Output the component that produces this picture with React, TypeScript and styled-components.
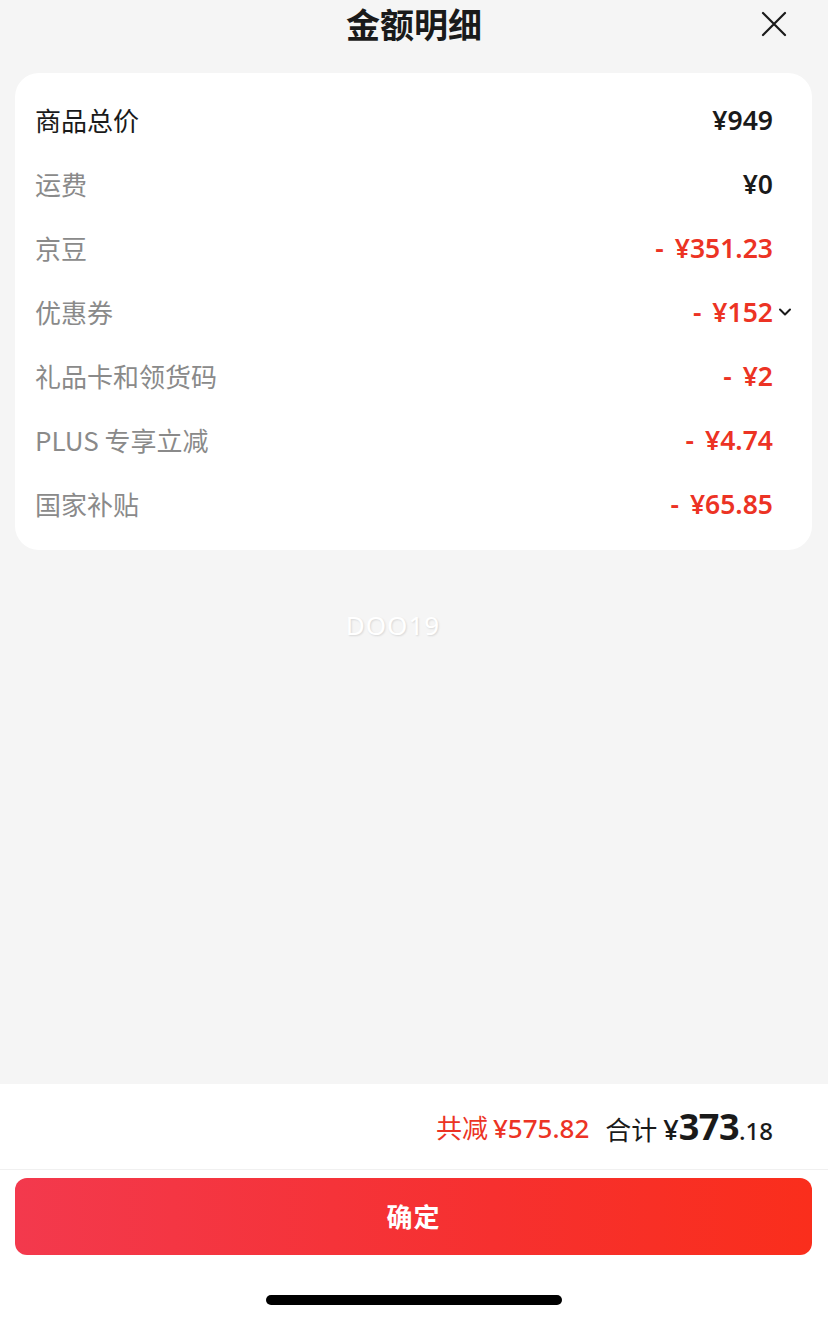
import React from "react";
import styled, { createGlobalStyle } from "styled-components";

const GlobalStyle = createGlobalStyle`
  html, body { margin: 0; padding: 0; background: #f5f5f5; }
  body { font-family: "Noto Sans CJK SC", "Noto Sans", sans-serif; -webkit-font-smoothing: antialiased; }
`;

const Page = styled.div`
  width: 828px;
  height: 1320px;
  display: flex;
  flex-direction: column;
  background: #f5f5f5;
  overflow: hidden;
`;

const Header = styled.div`
  position: relative;
  height: 50px;
  display: flex;
  align-items: flex-start;
  justify-content: center;
  padding-top: 4px;
  box-sizing: border-box;
`;

const Title = styled.h1`
  margin: 0;
  font-size: 34px;
  font-weight: 700;
  color: #1a1a1a;
  line-height: 40px;
`;

const CloseButton = styled.button`
  position: absolute;
  right: 40px;
  top: 10px;
  width: 28px;
  height: 28px;
  padding: 0;
  border: 0;
  background: transparent;
  display: flex;
  align-items: center;
  justify-content: center;
`;

const Card = styled.div`
  margin: 23px 16px 0 15px;
  background: #fff;
  border-radius: 24px;
  padding: 15px 0 14px;
  display: flex;
  flex-direction: column;
`;

const Row = styled.div`
  height: 64px;
  display: flex;
  align-items: center;
  justify-content: space-between;
  padding: 0 39px 0 20px;
`;

const Label = styled.span<{ $strong?: boolean }>`
  font-size: 26px;
  color: ${(p) => (p.$strong ? "#1a1a1a" : "#8a8a8a")};
  line-height: 1;
`;

const Value = styled.span<{ $red?: boolean }>`
  position: relative;
  display: flex;
  align-items: center;
  font-family: "Noto Sans", "Noto Sans CJK SC", sans-serif;
  font-size: 26.5px;
  font-weight: 600;
  color: ${(p) => (p.$red ? "#ec3324" : "#1a1a1a")};
  line-height: 1;
  white-space: pre;
`;

const Minus = styled.span`
  margin-right: 11px;
`;

const Chevron = styled.span`
  position: absolute;
  left: 100%;
  top: 50%;
  margin-left: 5px;
  margin-top: -7px;
  width: 14px;
  height: 14px;
  display: flex;
`;

const Watermark = styled.div`
  margin-top: 57px;
  text-align: center;
  padding-right: 42px;
  font-family: "Noto Sans", sans-serif;
  font-size: 26px;
  letter-spacing: 1px;
  color: #ffffff;
  text-shadow: 1px 1px 2px rgba(0, 0, 0, 0.12);
`;

const Spacer = styled.div`
  flex: 1;
`;

const Footer = styled.div`
  background: #fff;
  height: 236px;
  display: flex;
  flex-direction: column;
`;

const Summary = styled.div`
  height: 85px;
  display: flex;
  align-items: center;
  justify-content: flex-end;
  padding-right: 55px;
  border-bottom: 1px solid #f0f0f0;
  gap: 16px;
`;

const Saved = styled.span`
  color: #ec3324;
  font-size: 26px;
  display: flex;
  align-items: baseline;
  gap: 5px;
`;

const SavedAmount = styled.span`
  font-family: "Noto Sans", sans-serif;
  font-weight: 500;
  font-size: 26px;
`;

const Total = styled.span`
  color: #1a1a1a;
  font-size: 26px;
  display: flex;
  align-items: baseline;
  gap: 6px;
`;

const TotalAmount = styled.span`
  font-family: "Noto Sans", sans-serif;
  display: flex;
  align-items: baseline;
`;

const Yen = styled.span`
  font-size: 27px;
  font-weight: 500;
`;

const Big = styled.span`
  font-size: 36px;
  font-weight: 700;
  letter-spacing: -0.5px;
`;

const Small = styled.span`
  font-size: 24px;
  font-weight: 500;
`;

const ConfirmButton = styled.button`
  margin: 8px 16px 0 15px;
  height: 77px;
  border: 0;
  border-radius: 12px;
  background: linear-gradient(90deg, #f3394d 0%, #f6302f 60%, #fa2e1c 100%);
  color: #fff;
  font-family: "Noto Sans CJK SC", sans-serif;
  font-size: 26px;
  font-weight: 700;
  letter-spacing: 1px;
  padding-bottom: 3px;
`;

const HomeIndicator = styled.div`
  margin: 40px auto 0;
  width: 296px;
  height: 10px;
  border-radius: 5px;
  background: #000;
`;

const rows: { label: string; value: string; red?: boolean; strong?: boolean; chevron?: boolean }[] = [
  { label: "商品总价", value: "¥949", strong: true },
  { label: "运费", value: "¥0" },
  { label: "京豆", value: "¥351.23", red: true },
  { label: "优惠券", value: "¥152", red: true, chevron: true },
  { label: "礼品卡和领货码", value: "¥2", red: true },
  { label: "PLUS 专享立减", value: "¥4.74", red: true },
  { label: "国家补贴", value: "¥65.85", red: true },
];

export default function App() {
  return (
    <Page>
      <GlobalStyle />
      <Header>
        <Title>金额明细</Title>
        <CloseButton aria-label="关闭">
          <svg width="26" height="26" viewBox="0 0 26 26" fill="none">
            <path d="M2 2L24 24M24 2L2 24" stroke="#1a1a1a" strokeWidth="2.2" strokeLinecap="round" />
          </svg>
        </CloseButton>
      </Header>
      <Card>
        {rows.map((r) => (
          <Row key={r.label}>
            <Label $strong={r.strong}>{r.label}</Label>
            <Value $red={r.red}>
              {r.red && <Minus>-</Minus>}
              {r.value}
              {r.chevron && (
                <Chevron>
                  <svg width="14" height="14" viewBox="0 0 14 14" fill="none">
                    <path d="M2 4.5L7 9.5L12 4.5" stroke="#1a1a1a" strokeWidth="2" strokeLinecap="round" strokeLinejoin="round" />
                  </svg>
                </Chevron>
              )}
            </Value>
          </Row>
        ))}
      </Card>
      <Watermark>DOO19</Watermark>
      <Spacer />
      <Footer>
        <Summary>
          <Saved>
            共减<SavedAmount>¥575.82</SavedAmount>
          </Saved>
          <Total>
            合计
            <TotalAmount>
              <Yen>¥</Yen>
              <Big>373</Big>
              <Small>.18</Small>
            </TotalAmount>
          </Total>
        </Summary>
        <ConfirmButton>确定</ConfirmButton>
        <HomeIndicator />
      </Footer>
    </Page>
  );
}
